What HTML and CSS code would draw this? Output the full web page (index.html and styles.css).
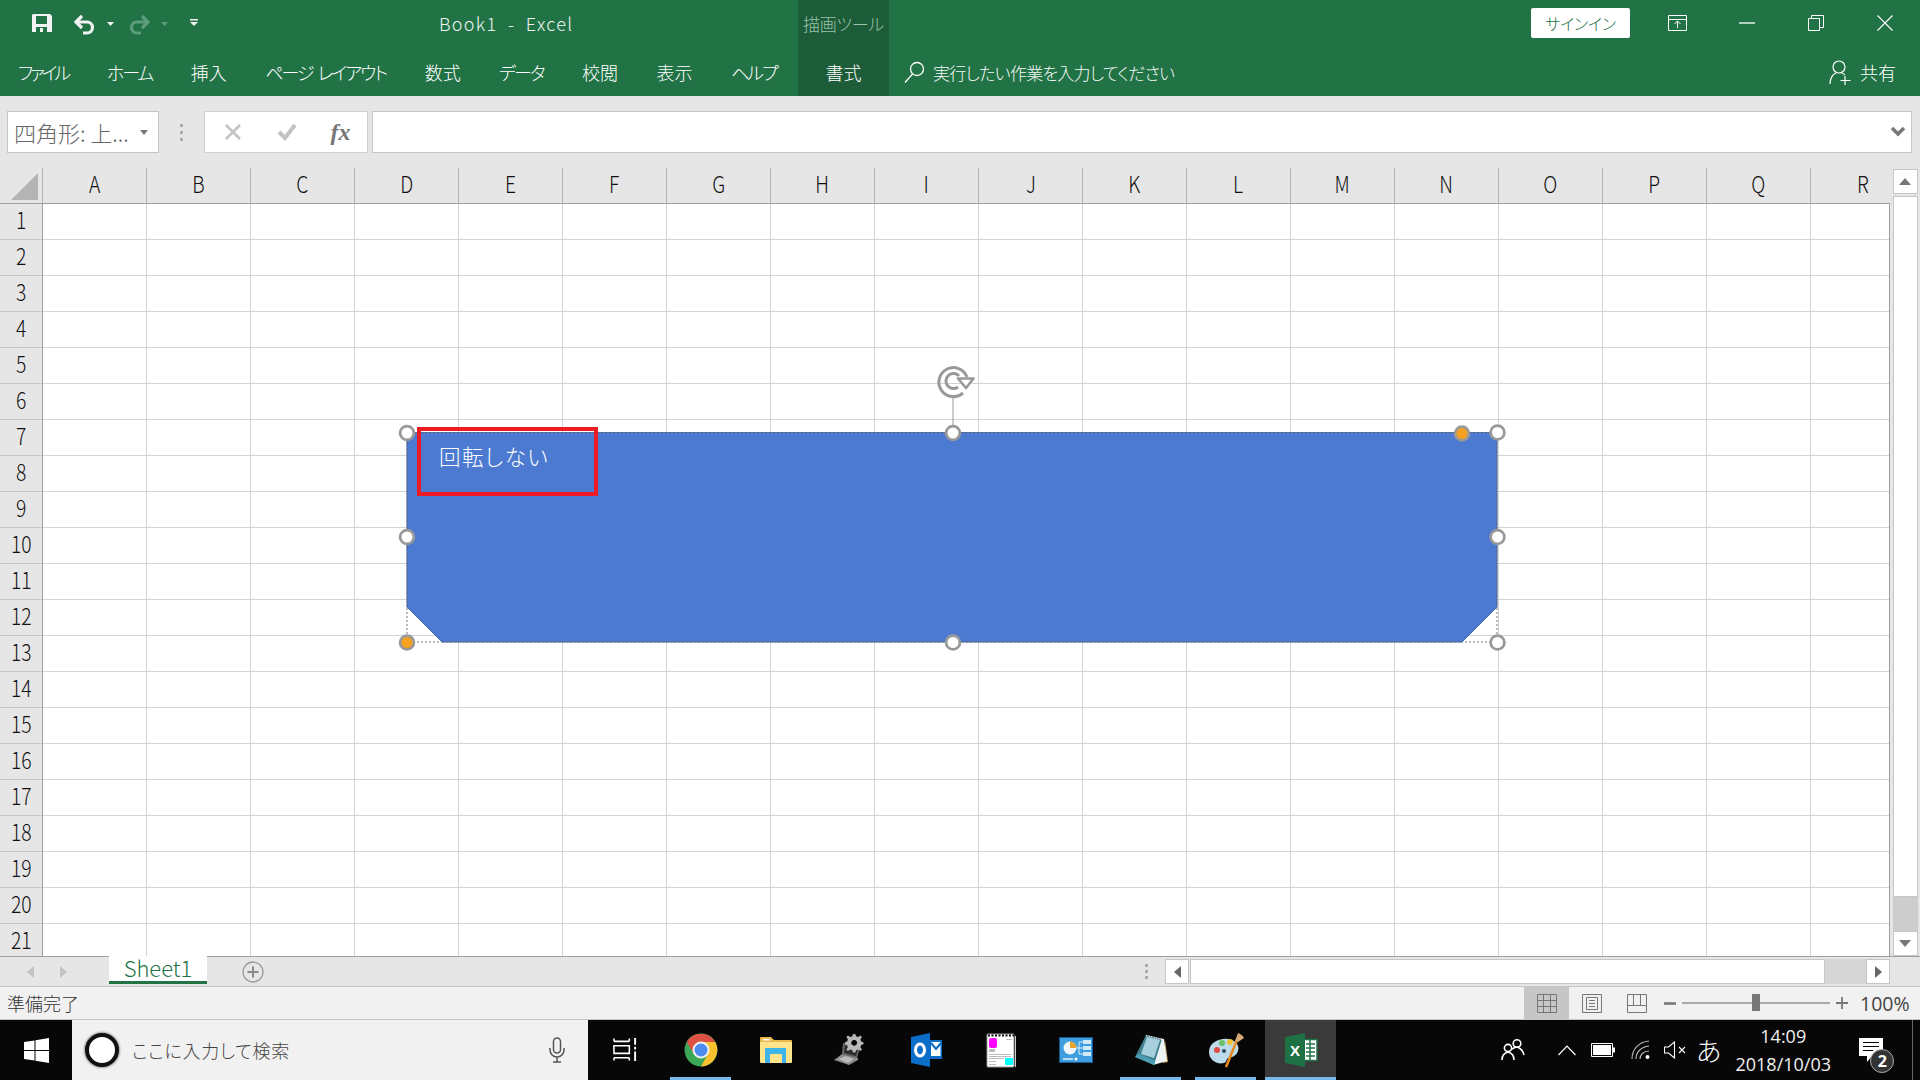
FILE: index.html
```html
<!DOCTYPE html>
<html lang="ja">
<head>
<meta charset="utf-8">
<title>Book1 - Excel</title>
<link rel="stylesheet" href="styles.css">
</head>
<body>
<div class="app">
  <header class="ribbon">
    <div class="title-row">
      <div class="qat">
        <svg class="qat-icon" width="210" height="48" viewBox="0 0 210 48">
          <path fill="#f2f2f2" fill-rule="evenodd" d="M33 14h17l2 2v16H32V15zM36 16v8h11v-8zM36 27v5h11v-5z"/>
          <rect x="40" y="28" width="3" height="4" fill="#f2f2f2"/>
          <g fill="none" stroke="#f2f2f2" stroke-width="3.2">
            <path d="M82 16l-6 6 6 6"/><path d="M76 22h11a5.500 5.500 0 0 1 0 11h-4"/>
          </g>
          <path fill="#f2f2f2" d="M107 22h7l-3.500 4z"/>
          <g fill="none" stroke="#5d9c7c" stroke-width="3.2">
            <path d="M142 16l6 6-6 6"/><path d="M148 22h-11a5.500 5.500 0 0 0 0 11h4"/>
          </g>
          <path fill="#5d9c7c" d="M161 22h7l-3.500 4z"/>
          <path fill="#f2f2f2" d="M190 19h8v1.500h-8zM190 22h8l-4 4z"/>
        </svg>
      </div>
      <div class="doc-title">Book1&nbsp; -&nbsp; Excel</div>
      <div class="context-head">描画ツール</div>
      <button class="signin">サインイン</button>
      <div class="win-btn"><svg width="20" height="16" viewBox="0 0 20 16"><path fill="none" stroke="#fff" d="M.5.500h18v15H.5zM.5 4.500h18M9.500 13V6M6.500 9l3-3 3 3"/></svg></div>
      <div class="win-btn"><svg width="16" height="2" viewBox="0 0 16 2"><path stroke="#fff" stroke-width="1.300" d="M0 1h16"/></svg></div>
      <div class="win-btn"><svg width="16" height="16" viewBox="0 0 16 16"><path fill="none" stroke="#fff" d="M.5 3.500h11v12H.5zM3.500 3.500V.5h12v12h-4"/></svg></div>
      <div class="win-btn"><svg width="16" height="16" viewBox="0 0 16 16"><path stroke="#fff" stroke-width="1.100" d="M.5.500l15 15M15.500.500l-15 15"/></svg></div>
    </div>
    <nav class="tab-row">
      <div class="tabs">
        <span class="tab kana tight">ファイル</span>
        <span class="tab kana">ホーム</span>
        <span class="tab">挿入</span>
        <span class="tab kana">ページ レイアウト</span>
        <span class="tab">数式</span>
        <span class="tab kana">データ</span>
        <span class="tab">校閲</span>
        <span class="tab">表示</span>
        <span class="tab kana">ヘルプ</span>
      </div>
      <div class="context-tab">書式</div>
      <div class="tell-me">
        <svg width="21" height="22" viewBox="0 0 21 22"><circle cx="13" cy="8" r="6.500" fill="none" stroke="#fff" stroke-width="1.300"/><path stroke="#fff" stroke-width="1.300" d="M8.500 13L1 21.500"/></svg>
        <span>実行したい作業を入力してください</span>
      </div>
      <div class="share">
        <svg width="22" height="26" viewBox="0 0 22 26"><circle cx="10" cy="8" r="6" fill="none" stroke="#fff" stroke-width="1.200"/><path fill="none" stroke="#fff" stroke-width="1.200" d="M1 25c0-6 3-10 6-11M13 14c1 .4 2 1 3 2M16 17v9M11.500 21.500h10"/></svg>
        <span>共有</span>
      </div>
    </nav>
  </header>

  <section class="formula-bar">
    <div class="name-box"><span>四角形: 上...</span><i class="caret-down"></i></div>
    <div class="grip"><b></b><b></b><b></b></div>
    <div class="fx-box">
      <svg width="18" height="18" viewBox="0 0 18 18"><path stroke="#c3c3c3" stroke-width="2.600" d="M2 2l14 14M16 2L2 16"/></svg>
      <svg width="20" height="18" viewBox="0 0 20 18"><path fill="none" stroke="#c3c3c3" stroke-width="4" d="M2 9l6 6L18 2"/></svg>
      <span class="fx">fx</span>
    </div>
    <div class="formula-input">
      <svg width="16" height="12" viewBox="0 0 16 12"><path fill="none" stroke="#777" stroke-width="3.500" d="M2 2l6 6 6-6"/></svg>
    </div>
  </section>

  <section class="sheet">
    <div class="sheet-main">
      <div class="col-heads">
        <div class="corner"><svg width="29" height="29" viewBox="0 0 29 29"><path fill="#b4b4b4" d="M28 1v27H1z"/></svg></div>
        <div class="cols">
          <div class="col"><span>A</span></div><div class="col"><span>B</span></div><div class="col"><span>C</span></div><div class="col"><span>D</span></div><div class="col"><span>E</span></div><div class="col"><span>F</span></div><div class="col"><span>G</span></div><div class="col"><span>H</span></div><div class="col"><span>I</span></div><div class="col"><span>J</span></div><div class="col"><span>K</span></div><div class="col"><span>L</span></div><div class="col"><span>M</span></div><div class="col"><span>N</span></div><div class="col"><span>O</span></div><div class="col"><span>P</span></div><div class="col"><span>Q</span></div><div class="col"><span>R</span></div>
        </div>
      </div>
      <div class="grid-body">
        <div class="row-heads">
          <div class="row"><span>1</span></div><div class="row"><span>2</span></div><div class="row"><span>3</span></div><div class="row"><span>4</span></div><div class="row"><span>5</span></div><div class="row"><span>6</span></div><div class="row"><span>7</span></div><div class="row"><span>8</span></div><div class="row"><span>9</span></div><div class="row"><span>10</span></div><div class="row"><span>11</span></div><div class="row"><span>12</span></div><div class="row"><span>13</span></div><div class="row"><span>14</span></div><div class="row"><span>15</span></div><div class="row"><span>16</span></div><div class="row"><span>17</span></div><div class="row"><span>18</span></div><div class="row"><span>19</span></div><div class="row"><span>20</span></div><div class="row"><span>21</span></div>
        </div>
        <div class="cells">
          <svg class="shape" width="1847" height="752" viewBox="43 204 1847 752">
            <path d="M953 397v35" stroke="#999" stroke-width="1"/>
            <path d="M407 608v34h35M1497 608v34h-35" fill="none" stroke="#777" stroke-dasharray="2 2"/>
            <polygon points="407,432.500 1497,432.500 1497,607 1462,642 442,642 407,607" fill="#4c7ad0" stroke="#3a63ad" stroke-width="1"/>
            <path d="M407 432.500h1090v175M407 432.500v175M442 642h1020" fill="none" stroke="#777" stroke-dasharray="2 2"/>
            <g fill="none" stroke="#999" stroke-width="3">
              <path d="M963 393A14.500 14.500 0 1 1 967 377"/>
              <path d="M958 387A7.500 7.500 0 1 1 959 376"/>
            </g>
            <path d="M958 378.500h15.500L966 388z" fill="#fff" stroke="#999" stroke-width="2.600" stroke-linejoin="round"/>
            <g fill="#fff" stroke="#999" stroke-width="2.800">
              <circle cx="407" cy="433" r="6.900"/>
              <circle cx="953" cy="433" r="6.900"/>
              <circle cx="1497.500" cy="432.500" r="6.900"/>
              <circle cx="407" cy="537" r="6.900"/>
              <circle cx="1497.500" cy="537" r="6.900"/>
              <circle cx="953" cy="642.500" r="6.900"/>
              <circle cx="1497.500" cy="642.500" r="6.900"/>
              <circle cx="1462" cy="433.500" r="6.900" fill="#f5a01e"/>
              <circle cx="407" cy="642.500" r="6.900" fill="#f5a01e"/>
            </g>
          </svg>
          <div class="shape-text">回転しない</div>
          <div class="callout"></div>
        </div>
      </div>
    </div>
    <aside class="vscroll">
      <div class="sb-btn"><i class="tri-up"></i></div>
      <div class="v-thumb"></div>
      <div class="v-track"></div>
      <div class="sb-btn"><i class="tri-down"></i></div>
    </aside>
  </section>

  <section class="tab-bar">
    <div class="sheet-nav"><i class="nav-left"></i><i class="nav-right"></i></div>
    <div class="sheet-tab">Sheet1</div>
    <div class="add-sheet"><svg width="22" height="22" viewBox="0 0 22 22"><circle cx="11" cy="11" r="10" fill="none" stroke="#9a9a9a" stroke-width="1.300"/><path stroke="#8a8a8a" stroke-width="2" d="M11 5.500v11M5.500 11h11"/></svg></div>
    <div class="grip tab-grip"><b></b><b></b><b></b></div>
    <div class="hscroll">
      <div class="h-btn"><i class="tri-left"></i></div>
      <div class="h-thumb"></div>
      <div class="h-track"></div>
      <div class="h-btn"><i class="tri-right"></i></div>
    </div>
  </section>

  <footer class="status-bar">
    <span class="status-text">準備完了</span>
    <div class="view-btn active"><svg width="20" height="19" viewBox="0 0 20 19"><path fill="none" stroke="#777" d="M.5.500h19v18H.5zM.5 6.500h19M.5 12.500h19M6.500.500v18M13.500.500v18"/></svg></div>
    <div class="view-btn"><svg width="20" height="19" viewBox="0 0 20 19"><path fill="none" stroke="#777" d="M.5.500h19v18H.5zM4.500 3.500h11v12h-11zM7 6.500h6M7 9.500h6M7 12.500h6"/></svg></div>
    <div class="view-btn"><svg width="20" height="19" viewBox="0 0 20 19"><path fill="none" stroke="#777" d="M.5.500h19v18H.5zM.5 11.500h19M6.500.500v11M13.500.500v11"/></svg></div>
    <div class="zoom-ctl">
      <svg width="12" height="3" viewBox="0 0 12 3"><path stroke="#777" stroke-width="2.600" d="M0 1.500h12"/></svg>
      <div class="zoom-track"><div class="zoom-thumb"></div></div>
      <svg width="12" height="12" viewBox="0 0 12 12"><path stroke="#777" stroke-width="1.800" d="M0 6h12M6 0v12"/></svg>
    </div>
    <span class="zoom-val">100%</span>
  </footer>

  <footer class="taskbar">
    <div class="start"><svg width="25" height="25" viewBox="0 0 25 25"><path fill="#fff" d="M0 4l10.500-1.500V12H0zM11.500 2.300L25 0v12H11.500zM0 13h10.500v9.500L0 21zM11.500 13H25v12l-13.500-2.200z"/></svg></div>
    <div class="search">
      <span class="cortana"></span>
      <span class="search-text">ここに入力して検索</span>
      <svg class="mic" width="16" height="26" viewBox="0 0 16 26"><rect x="4.500" y="1" width="7" height="15" rx="3.500" fill="none" stroke="#555" stroke-width="1.500"/><path fill="none" stroke="#555" stroke-width="1.500" d="M1 11v2a7 7 0 0 0 14 0v-2M8 20v5M4 25h8"/></svg>
    </div>
    <div class="apps">
      <div class="app-btn"><svg width="25" height="25" viewBox="0 0 26 26"><path fill="none" stroke="#fff" stroke-width="1.600" d="M1 8h16v8H1zM1 3.500h16M1 .5v3M17 .5v3M1 20.500h16M1 20.500v3M17 20.500v3"/><path fill="#fff" d="M22 0h2v7h-2zM22 9h2v3h-2zM22 14h2v10h-2z"/></svg></div>
      <div class="app-btn open"><svg width="34" height="34" viewBox="0 0 34 34"><circle cx="17" cy="17" r="16.500" fill="#3aa757"/><path fill="#dd5144" d="M2.700 9A16.500 16.500 0 0 1 31.300 9H17l-7 12z"/><path fill="#fbc02d" d="M31.300 9A16.500 16.500 0 0 1 17 33.500L24 21 17 9z"/><circle cx="17" cy="17" r="8.500" fill="#f1f1f1"/><circle cx="17" cy="17" r="6.500" fill="#4c8bf0"/></svg></div>
      <div class="app-btn"><svg width="34" height="28" viewBox="0 0 34 28"><path fill="#e9b94f" d="M1 2q0-1 1-1h10l3 3h17q1 0 1 1v4H1z"/><path fill="#fff" d="M4 3h7v1.500H4z"/><path fill="#ffe48c" d="M1 6h32v20q0 1-1 1H2q-1 0-1-1z"/><path fill="#3fb4e8" d="M6 27V13q0-1 1-1h19q1 0 1 1v14h-4v-9H11v9z"/></svg></div>
      <div class="app-btn"><svg width="36" height="32" viewBox="0 0 36 32"><path fill="#666" d="M10 9l17 5-3 10-15-4z"/><path fill="#2c2c2c" d="M12 11l13 4-2 7-12-3z"/><path fill="#8a8a8a" d="M9 20l16 4 0 2-9 5-15-5z"/><path fill="#bbb" d="M5 25l8-3 8 3-6 4z"/><path fill="#b8b8b8" fill-rule="evenodd" d="M19 0h3l1 3 3 1 3-2 2 2-2 3 1 3 3 1v3l-3 1-1 3 2 3-2 2-3-2-3 1-1 3h-3l-1-3-3-1-3 2-2-2 2-3-1-3-3-1v-3l3-1 1-3-2-3 2-2 3 2 3-1zM20.500 8a4 4 0 1 0 .01 0z" transform="translate(6 0) scale(.74)"/></svg></div>
      <div class="app-btn"><svg width="34" height="34" viewBox="0 0 34 34"><path fill="#0a6ec8" d="M2 4l19-4v34L2 30z"/><path fill="#0a6ec8" d="M21 7h12v19H21z"/><path fill="#fff" d="M22 9h9.500v14H22z"/><path fill="none" stroke="#0a6ec8" stroke-width="2" d="M22 10l5 6 5-6"/><ellipse cx="11" cy="17" rx="4.500" ry="6" fill="none" stroke="#fff" stroke-width="3"/></svg></div>
      <div class="app-btn"><svg width="30" height="35" viewBox="0 0 30 35"><rect x="1" y="1" width="27" height="33" rx="1" fill="#fff" stroke="#999"/><path d="M29.500 3v31" stroke="#ccc"/><path stroke="#111" stroke-width="2" stroke-dasharray="2 1.500" d="M2 2.500h26"/><rect x="3" y="5" width="8" height="10" rx="2" fill="#f0f"/><rect x="3" y="16" width="6" height="3" fill="#bbb"/><path stroke="#bbb" d="M3 21.500h22M3 23.500h22M3 25.500h15M3 28.500h7M3 31.500h7M20 6.500h6"/><rect x="19" y="25" width="8" height="7" rx="1" fill="#0ff"/></svg></div>
      <div class="app-btn"><svg width="34" height="26" viewBox="0 0 34 26"><rect x=".5" y=".5" width="33" height="25" fill="#3f9ee0" stroke="#16588f"/><circle cx="11" cy="11" r="6.500" fill="#eef6fc"/><path fill="#e8a32c" d="M11 11V4.500A6.500 6.500 0 0 1 17.500 11z"/><path fill="none" stroke="#d8eefb" d="M17 11h3v-6h4M20 11h4M20 11v6h4"/><rect x="24" y="3" width="8" height="4" fill="#cfe9fa"/><rect x="24" y="9" width="8" height="4" fill="#cfe9fa"/><rect x="24" y="15" width="8" height="4" fill="#cfe9fa"/><path stroke="#bcdcf2" stroke-width="2" d="M4 22h10"/><circle cx="17" cy="22" r="1.500" fill="#fff"/></svg></div>
      <div class="app-btn open"><svg width="34" height="32" viewBox="0 0 34 32"><path fill="#c8a45c" d="M31 6l3 22-5 1z"/><path fill="#eef3f4" d="M14 2l16 3 3 22-14 4z"/><path fill="#3f7f90" d="M12 1l16 4-8 26-19-8z"/><path fill="#a7d0dc" d="M13 3l13 3-6 18-13-4z"/><path fill="#4c9eb4" d="M1 23l19 8 1-4-16-7z"/><path stroke="#d5d5d5" stroke-width="1.500" stroke-dasharray="1.500 1" d="M12 1.500l16 4"/></svg></div>
      <div class="app-btn open"><svg width="36" height="36" viewBox="0 0 36 36"><path fill="#bcdcec" d="M1 20C1 11 11 6 20 7c8 1 12 7 10 12-2 6-7 6-10 7-2 1-1 4-4 5-7 2-15-3-15-11z"/><circle cx="9" cy="18" r="3" fill="#e04a3f"/><circle cx="14" cy="11" r="3" fill="#6cc06a"/><circle cx="22" cy="10" r="3" fill="#f0c030"/><circle cx="16" cy="19" r="2" fill="#2c4a5c"/><path stroke="#e98a1f" stroke-width="2.600" d="M29 8l-11 27"/><path fill="#d8a878" d="M27 9l3-8c3 1 5 3 6 5l-6 4z"/></svg></div>
      <div class="app-btn current"><svg width="34" height="34" viewBox="0 0 34 34"><path fill="#fff" d="M20 6h13v22H20z"/><path fill="none" stroke="#217346" stroke-width="1.500" d="M20 6.500h13v21H20M22 11h9M22 15h9M22 19h9M22 23h9M26 7v20"/><path fill="#1e7145" d="M1 4l20-4v34L1 30z"/><text class="xl" x="11" y="23" text-anchor="middle">X</text></svg></div>
    </div>
    <div class="tray">
      <svg class="t-people" width="24" height="24" viewBox="0 0 24 24"><g fill="none" stroke="#fff" stroke-width="1.600"><circle cx="16" cy="5.500" r="3.800"/><circle cx="7" cy="10" r="3.600"/><path d="M1 22c0-4 2-7 6-8 4 1 6 4 6 8M11 11c2-1 3-2 5-2 3 1 6 4 7 8"/></g></svg>
      <svg class="t-chev" width="18" height="11" viewBox="0 0 18 11"><path fill="none" stroke="#fff" stroke-width="1.200" d="M.5 10L9 1l8.500 9"/></svg>
      <svg class="t-batt" width="24" height="14" viewBox="0 0 24 14"><path fill="none" stroke="#fff" d="M.5.500h21v13H.5z"/><rect x="2" y="2" width="18" height="10" fill="#fff"/><rect x="22" y="4.500" width="2" height="5" fill="#fff"/></svg>
      <svg class="t-wifi" width="20" height="20" viewBox="0 0 20 20"><g fill="none" stroke="#bbb" stroke-width="1.100"><path d="M1 19C1 9 8 2 18 1M5 19c0-7 5-12 13-13M9 19c0-4 3-8 9-8"/></g><circle cx="16.500" cy="17" r="2" fill="#fff"/></svg>
      <svg class="t-spk" width="22" height="18" viewBox="0 0 22 18"><path fill="none" stroke="#fff" stroke-width="1.100" d="M.5 6h4l6-5v16l-6-5h-4zM15 6l6 6M21 6l-6 6"/></svg>
      <span class="t-ime">あ</span>
      <div class="clock"><span>14:09</span><span>2018/10/03</span></div>
      <div class="notif">
        <svg width="26" height="26" viewBox="0 0 26 26"><path fill="#fff" d="M1 1h24v18H14l-5 6v-6H1z"/><path stroke="#000" d="M5 5.500h16M5 9.500h16M5 13.500h10"/></svg>
        <span class="badge">2</span>
      </div>
      <div class="desk-line"></div>
    </div>
  </footer>
</div>
</body>
</html>
```
FILE: styles.css
```css
* { box-sizing: border-box; }
html, body { margin: 0; padding: 0; }
body {
  width: 1920px;
  height: 1080px;
  overflow: hidden;
  background: #fff;
  font-family: "Noto Sans CJK JP", "Noto Sans", sans-serif;
  font-feature-settings: "palt";
}
svg { display: block; flex: none; }
.app { display: flex; flex-direction: column; height: 1080px; }

/* Ribbon */
.ribbon { height: 96px; background: #217346; color: #fff; flex: none; }
.title-row, .tab-row { display: flex; height: 48px; }
.qat { width: 439px; flex: none; }
.doc-title { width: 359px; flex: none; font-size: 18px; line-height: 46px; color: #f0f5f2; font-weight: 300; letter-spacing: 1.3px; white-space: nowrap; }
.context-head { width: 91px; flex: none; background: #1c5c39; color: #9cc3ac; font-size: 17px; font-weight: 300; line-height: 48px; text-align: center; letter-spacing: -.3px; }
.signin { margin: 8px 13px 0 auto; width: 99px; height: 30px; padding: 0; border: 0; border-radius: 2px; background: #fff; color: #217346; font: 300 16px/30px "Noto Sans CJK JP", sans-serif; font-feature-settings: "palt"; letter-spacing: -.2px; }
.win-btn { width: 69px; flex: none; display: flex; align-items: center; justify-content: center; height: 46px; }
.win-btn:last-child { margin-right: 1px; }
.tabs { width: 798px; flex: none; display: flex; gap: 38.5px; padding-left: 18px; font-size: 18px; font-weight: 300; line-height: 48px; white-space: nowrap; }
.tab.kana { letter-spacing: -2px; word-spacing: 3px; }
.tab.tight { letter-spacing: -3px; }
.context-tab { width: 91px; flex: none; background: #1c5c39; font-size: 18px; font-weight: 300; line-height: 48px; text-align: center; }
.tell-me { display: flex; align-items: center; gap: 8px; margin-left: 15px; font-size: 17px; font-weight: 300; letter-spacing: -.75px; color: #f5f8f6; }
.share { margin-left: auto; margin-right: 24px; display: flex; align-items: center; gap: 9px; font-size: 18px; font-weight: 300; }

/* Formula bar */
.formula-bar { height: 72px; flex: none; background: #e6e6e6; display: flex; padding: 15px 7px 15px 7px; }
.name-box { width: 152px; background: #fff; border: 1px solid #c6c6c6; display: flex; align-items: center; padding: 0 0 0 6px; color: #666; font-size: 22px; font-weight: 300; position: relative; white-space: nowrap; }
.caret-down { position: absolute; right: 10px; top: 18px; width: 0; height: 0; border: 4px solid transparent; border-top: 5px solid #777; border-bottom: 0; }
.grip { width: 45px; flex: none; display: flex; flex-direction: column; align-items: center; justify-content: center; gap: 4px; }
.grip b { width: 3px; height: 3px; background: #aaa; display: block; }
.fx-box { width: 164px; background: #fff; border: 1px solid #cfcfcf; display: grid; grid-template-columns: 55px 54px 53px; justify-items: center; align-items: center; }
.fx { font-family: "Liberation Serif", serif; font-style: italic; font-weight: 700; font-size: 24px; color: #777; line-height: 1; }
.formula-input { width: 1540px; margin-left: 4px; background: #fff; border: 1px solid #c6c6c6; display: flex; justify-content: flex-end; align-items: center; padding-right: 5px; }

/* Sheet */
.sheet { flex: none; height: 788px; display: flex; background: #e6e6e6; }
.sheet-main { width: 1890px; flex: none; display: flex; flex-direction: column; }
.col-heads { height: 36px; flex: none; display: flex; border-bottom: 1px solid #9f9f9f; }
.corner { width: 43px; flex: none; padding: 4px 0 0 10px; border-right: 1px solid #b5b5b5; }
.cols { display: flex; width: 1847px; }
.col { width: 104px; flex: none; text-align: center; border-right: 1px solid #b0b0b0; font-size: 23px; font-weight: 300; line-height: 30px; color: #111; }
.col:last-child { width: 79px; padding-left: 24px; border-right: 0; }
.col span, .row span { display: inline-block; transform: scaleX(.84); }
.grid-body { flex: 1; display: flex; min-height: 0; }
.row-heads { width: 43px; flex: none; border-right: 1px solid #9f9f9f; }
.row { height: 36px; text-align: center; border-bottom: 1px solid #c8c8c8; font-size: 23px; font-weight: 300; line-height: 31px; color: #111; }
.row:last-child { height: 32px; border-bottom: 0; }
.cells {
  flex: 1;
  position: relative;
  background-color: #fff;
  background-image: linear-gradient(to right, transparent 103px, #d4d4d4 103px), linear-gradient(to bottom, transparent 35px, #d4d4d4 35px);
  background-size: 104px 36px;
  border-right: 1px solid #9f9f9f;
}
.shape { position: absolute; left: 0; top: 0; }
.shape-text { position: absolute; left: 396px; top: 236px; color: #fff; font-size: 21.5px; font-weight: 300; line-height: 32px; letter-spacing: 1.5px; white-space: nowrap; }
.callout { position: absolute; left: 374px; top: 223px; width: 181px; height: 69px; border: 4px solid #ed1c24; }

.vscroll { width: 30px; flex: none; display: flex; flex-direction: column; align-items: center; padding: 1px 0 0 0; }
.sb-btn { width: 25px; height: 25px; flex: none; background: #fff; border: 1px solid #c6c6c6; display: flex; align-items: center; justify-content: center; }
.v-thumb { width: 25px; height: 701px; flex: none; margin-top: 2px; background: #fff; border: 1px solid #c6c6c6; }
.v-track { flex: 1; width: 25px; background: #cdcdcd; }
.tri-up, .tri-down, .tri-left, .tri-right { display: block; width: 0; height: 0; border: 6px solid transparent; }
.tri-up { border-bottom: 7px solid #777; border-top: 0; }
.tri-down { border-top: 7px solid #777; border-bottom: 0; }
.tri-left { border-right: 7px solid #666; border-left: 0; }
.tri-right { border-left: 7px solid #666; border-right: 0; }

/* Sheet tabs */
.tab-bar { height: 31px; flex: none; background: #e6e6e6; border-top: 1px solid #9f9f9f; border-bottom: 1px solid #c6c6c6; display: flex; }
.sheet-nav { width: 109px; flex: none; display: flex; gap: 26px; padding: 9px 0 0 27px; }
.nav-left, .nav-right { display: block; width: 0; height: 0; border: 6px solid transparent; }
.nav-left { border-right: 7px solid #c3c3c3; border-left: 0; }
.nav-right { border-left: 7px solid #c3c3c3; border-right: 0; }
.sheet-tab { width: 98px; height: 28px; flex: none; margin-top: -1px; background: #fff; border-bottom: 3px solid #217346; color: #217346; font-size: 22px; font-weight: 300; line-height: 23px; text-align: center; }
.add-sheet { margin-left: 35px; width: 22px; padding-top: 4px; flex: none; }
.tab-grip { margin-left: 863px; width: 39px; gap: 3px; }
.hscroll { width: 746px; flex: none; display: flex; padding-top: 2px; height: 28px; margin-left: -1px; }
.h-btn { width: 24px; height: 25px; flex: none; background: #fff; border: 1px solid #c6c6c6; display: flex; align-items: center; justify-content: center; }
.h-thumb { width: 635px; height: 25px; flex: none; margin-left: 1px; background: #fff; border: 1px solid #c6c6c6; }
.h-track { width: 41px; height: 25px; flex: none; background: #d6d6d6; }

/* Status */
.status-bar { height: 33px; flex: none; background: #f1f1f1; border-bottom: 1px solid #c6c6c6; display: flex; align-items: stretch; }
.status-text { width: 1524px; flex: none; padding-left: 7px; font-size: 18px; font-weight: 300; line-height: 33px; color: #333; }
.view-btn { width: 45px; flex: none; display: flex; align-items: center; justify-content: center; }
.view-btn.active { background: #c6c6c6; }
.zoom-ctl { width: 202px; flex: none; padding-left: 5px; display: flex; align-items: center; gap: 6px; }
.zoom-track { width: 148px; flex: none; height: 2px; background: #aaa; position: relative; }
.zoom-thumb { position: absolute; left: 70px; top: -8px; width: 8px; height: 17px; background: #777; }
.zoom-val { font-family: "Open Sans", sans-serif; font-size: 19.5px; line-height: 33px; color: #444; white-space: nowrap; margin-left: -1px; }

/* Taskbar */
.taskbar { height: 60px; flex: none; background: #070707; display: flex; }
.start { width: 72px; flex: none; display: flex; align-items: center; justify-content: center; }
.search { width: 516px; flex: none; background: #f1f1f1; display: flex; align-items: center; padding: 0 0 0 13px; }
.cortana { width: 34px; height: 34px; flex: none; border-radius: 50%; background: #fff; border: 4px solid #111; box-shadow: 0 0 2px 1px #999; }
.search-text { margin-left: 13px; font-size: 18px; font-weight: 300; color: #444; letter-spacing: .7px; white-space: nowrap; }
.mic { margin-left: auto; margin-right: 23px; }
.apps { display: flex; gap: 4px; padding-left: 2px; height: 60px; flex: none; }
.app-btn { width: 71px; height: 60px; flex: none; display: flex; align-items: center; justify-content: center; position: relative; }
.app-btn.open::after, .app-btn.current::after { content: ""; position: absolute; left: 5px; right: 5px; bottom: 0; height: 3px; background: #76b9ed; }
.app-btn.current { background: #3a3a3a; }
.app-btn.current::after { left: 0; right: 0; }
.xl { font: 700 15px "Liberation Sans", sans-serif; fill: #fff; }
.tray { flex: 1; display: flex; align-items: center; color: #fff; position: relative; }
.t-people { margin-left: 165px; }
.t-chev { margin-left: 33px; }
.t-batt { margin-left: 15px; }
.t-wifi { margin-left: 16px; }
.t-spk { margin-left: 13px; }
.t-ime { margin-left: 10px; font-size: 26px; font-weight: 300; line-height: 1; }
.clock { width: 100px; margin-left: 12px; display: flex; flex-direction: column; align-items: center; gap: 6px; font-family: "Open Sans", sans-serif; font-size: 18px; line-height: 22px; color: #f0f0f0; white-space: nowrap; }
.notif { position: relative; margin-left: 25px; width: 26px; }
.badge { position: absolute; left: 12px; top: 12px; width: 24px; height: 24px; border-radius: 50%; background: #333; border: 1px solid #aaa; font: 700 16px/22px "Open Sans", sans-serif; text-align: center; }
.desk-line { position: absolute; right: 7px; top: 0; width: 1px; height: 60px; background: #666; }
```
